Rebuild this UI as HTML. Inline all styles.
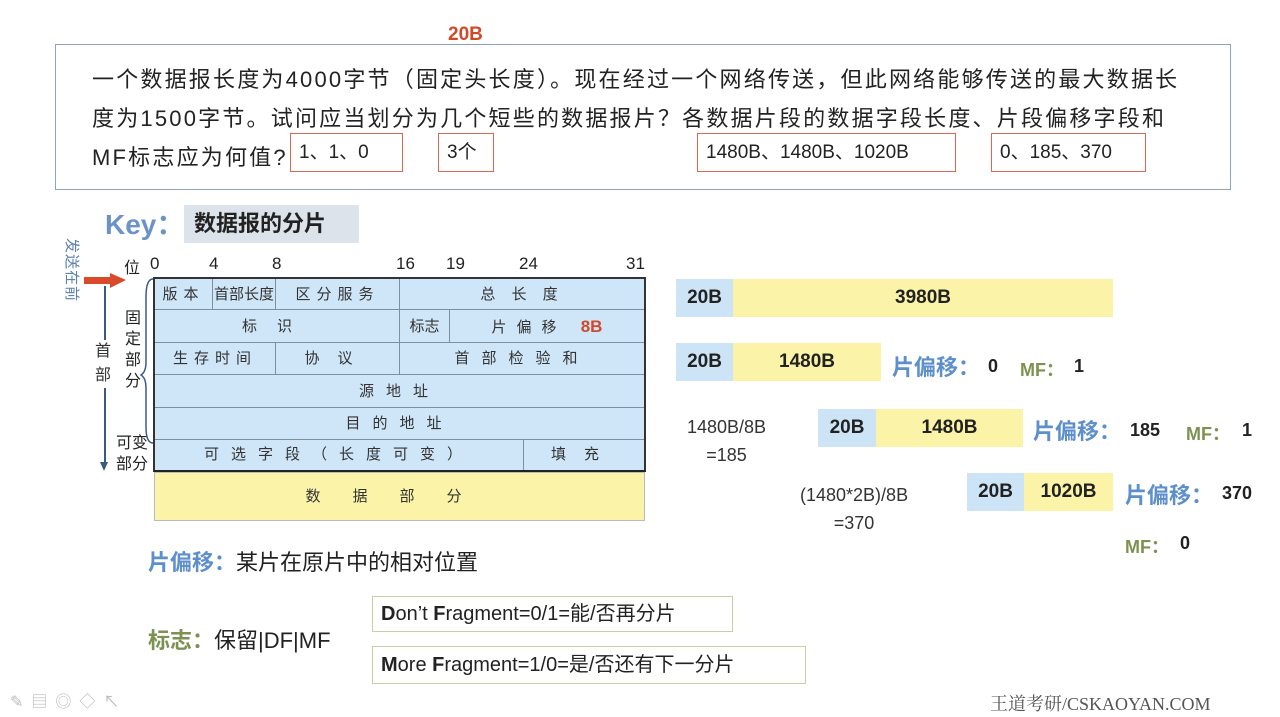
<!DOCTYPE html>
<html><head><meta charset="utf-8">
<style>
*{margin:0;padding:0;box-sizing:border-box}
body{width:1280px;height:717px;background:#fff;position:relative;overflow:hidden;font-family:"Liberation Sans","Noto Sans CJK SC",sans-serif;color:#222}
.a{position:absolute;white-space:nowrap}
.rb{position:absolute;border:1.5px solid #d86a52;font-size:19px;line-height:38px;padding-left:8px}
.cell{position:absolute;border-right:1px solid #7f8fa0;border-bottom:1px solid #7f8fa0;background:#cfe6f8;font-size:15px;color:#333;text-align:center;letter-spacing:6px}
.bl{position:absolute;background:#cde4f6;font-weight:bold;font-size:19px;text-align:center;line-height:38px}
.ye{position:absolute;background:#fbf3a8;font-weight:bold;font-size:19px;text-align:center;line-height:38px}
.py{color:#5d8fcc;font-weight:bold;font-size:22px}
.mf{color:#7d9250;font-weight:bold;font-size:18px}
.num{font-weight:bold;font-size:18px}
.h{position:absolute;font-size:17px;top:254px}
</style></head><body>
<div class="a" style="left:448px;top:24px;color:#d04a2a;font-weight:bold;font-size:19px">20B</div>
<div class="a" style="left:55px;top:44px;width:1176px;height:146px;border:1.5px solid #8da3c4"></div>
<div class="a" style="left:92px;top:60px;font-size:22px;line-height:39px;letter-spacing:2.2px">一个数据报长度为4000字节（固定头长度）。现在经过一个网络传送，但此网络能够传送的最大数据长<br>度为1500字节。试问应当划分为几个短些的数据报片？各数据片段的数据字段长度、片段偏移字段和<br>MF标志应为何值?</div>
<div class="rb" style="left:290px;top:133px;width:113px;height:39px">1、1、0</div>
<div class="rb" style="left:438px;top:133px;width:56px;height:39px">3个</div>
<div class="rb" style="left:697px;top:133px;width:259px;height:39px">1480B、1480B、1020B</div>
<div class="rb" style="left:991px;top:133px;width:155px;height:39px">0、185、370</div>

<div class="a" style="left:105px;top:203px;font-size:28px;font-weight:bold;color:#6c93c8">Key：</div>
<div class="a" style="left:184px;top:205px;width:175px;height:38px;background:#dde3ea;font-size:22px;font-weight:bold;line-height:38px;padding-left:10px">数据报的分片</div>

<div class="a" style="left:62px;top:238px;font-size:15px;color:#5a7fb0;writing-mode:vertical-rl;text-orientation:sideways;letter-spacing:1px">发送在前</div>
<div class="a" style="left:84px;top:277px;width:30px;height:7px;background:#d84a2a"></div>
<div class="a" style="left:110px;top:273px;border-left:16px solid #d84a2a;border-top:7px solid transparent;border-bottom:8px solid transparent"></div>
<div class="a" style="left:104px;top:286px;width:1.5px;height:180px;background:#3a5a80"></div>
<div class="a" style="left:100px;top:462px;border-top:9px solid #3a5a80;border-left:4px solid transparent;border-right:4px solid transparent"></div>
<div class="a" style="left:95px;top:340px;width:18px;background:#fff;font-size:16px;line-height:24px;color:#333">首<br>部</div>
<div class="a" style="left:124px;top:254px;font-size:16px">位</div>
<div class="a" style="left:125px;top:308px;font-size:16px;line-height:21px">固<br>定<br>部<br>分</div>
<div class="a" style="left:116px;top:433px;font-size:16px;line-height:21px">可变<br>部分</div>
<svg class="a" style="left:140px;top:277px" width="16" height="170"><path d="M13 2 Q6 2 6 20 L6 85 Q6 95 1 98 Q6 101 6 111 L6 150 Q6 166 13 166" fill="none" stroke="#3a5a90" stroke-width="1.5"/></svg>

<div class="h" style="left:150px">0</div>
<div class="h" style="left:209px">4</div>
<div class="h" style="left:272px">8</div>
<div class="h" style="left:396px">16</div>
<div class="h" style="left:446px">19</div>
<div class="h" style="left:519px">24</div>
<div class="h" style="left:626px">31</div>

<div class="a" style="left:153px;top:277px;width:493px;height:195px;border:2px solid #333;border-bottom:2px solid #222;background:#cfe6f8"></div>
<div class="cell" style="left:155px;top:279px;width:58px;height:31px;line-height:31px">版本</div>
<div class="cell" style="left:213px;top:279px;width:63px;height:31px;line-height:31px;letter-spacing:0">首部长度</div>
<div class="cell" style="left:276px;top:279px;width:124px;height:31px;line-height:31px">区分服务</div>
<div class="cell" style="left:400px;top:279px;width:244px;height:31px;line-height:31px;border-right:0">总 长 度</div>
<div class="cell" style="left:155px;top:310px;width:245px;height:33px;line-height:33px;letter-spacing:20px">标识</div>
<div class="cell" style="left:400px;top:310px;width:50px;height:33px;line-height:33px;letter-spacing:0">标志</div>
<div class="cell" style="left:450px;top:310px;width:194px;height:33px;line-height:33px;border-right:0;letter-spacing:10px">片偏移 <b style="color:#d04a2a;letter-spacing:0;font-size:17px">8B</b></div>
<div class="cell" style="left:155px;top:343px;width:121px;height:32px;line-height:32px">生存时间</div>
<div class="cell" style="left:276px;top:343px;width:124px;height:32px;line-height:32px;letter-spacing:18px">协议</div>
<div class="cell" style="left:400px;top:343px;width:244px;height:32px;line-height:32px;border-right:0;letter-spacing:12px">首部检验和</div>
<div class="cell" style="left:155px;top:375px;width:489px;height:33px;line-height:33px;border-right:0;letter-spacing:12px">源地址</div>
<div class="cell" style="left:155px;top:408px;width:489px;height:32px;line-height:32px;border-right:0;letter-spacing:12px">目的地址</div>
<div class="cell" style="left:155px;top:440px;width:369px;height:30px;line-height:30px;border-bottom:0;letter-spacing:12px">可选字段（长度可变）</div>
<div class="cell" style="left:524px;top:440px;width:120px;height:30px;line-height:30px;border:0;letter-spacing:18px">填充</div>
<div class="a" style="left:154px;top:472px;width:491px;height:49px;background:#fbf3a8;border:1px solid #bbb;font-size:15px;text-align:center;line-height:48px;letter-spacing:32px;color:#333">数据部分</div>

<div class="bl" style="left:676px;top:279px;width:57px;height:38px">20B</div>
<div class="ye" style="left:733px;top:279px;width:380px;height:38px">3980B</div>
<div class="bl" style="left:676px;top:343px;width:57px;height:38px">20B</div>
<div class="ye" style="left:733px;top:343px;width:148px;height:38px">1480B</div>
<div class="a py" style="left:892px;top:350px">片偏移：</div>
<div class="a num" style="left:988px;top:356px">0</div>
<div class="a mf" style="left:1020px;top:356px">MF：</div>
<div class="a num" style="left:1074px;top:356px">1</div>
<div class="a" style="left:687px;top:413px;font-size:18px;color:#333;line-height:28px;text-align:center">1480B/8B<br>=185</div>
<div class="bl" style="left:818px;top:409px;width:58px;height:38px">20B</div>
<div class="ye" style="left:876px;top:409px;width:147px;height:38px">1480B</div>
<div class="a py" style="left:1033px;top:414px">片偏移：</div>
<div class="a num" style="left:1130px;top:420px">185</div>
<div class="a mf" style="left:1186px;top:420px">MF：</div>
<div class="a num" style="left:1242px;top:420px">1</div>
<div class="a" style="left:800px;top:481px;font-size:18px;color:#333;line-height:28px;text-align:center">(1480*2B)/8B<br>=370</div>
<div class="bl" style="left:967px;top:473px;width:57px;height:38px">20B</div>
<div class="ye" style="left:1024px;top:473px;width:89px;height:38px">1020B</div>
<div class="a py" style="left:1125px;top:478px">片偏移：</div>
<div class="a num" style="left:1222px;top:483px">370</div>
<div class="a mf" style="left:1125px;top:533px">MF：</div>
<div class="a num" style="left:1180px;top:533px">0</div>

<div class="a" style="left:148px;top:545px;font-size:22px"><span style="color:#5d8fcc;font-weight:bold">片偏移：</span>某片在原片中的相对位置</div>
<div class="a" style="left:148px;top:623px;font-size:22px"><span style="color:#7d9250;font-weight:bold">标志：</span>保留|DF|MF</div>
<div class="a" style="left:372px;top:596px;width:361px;height:36px;border:1px solid #c9d0a8;font-size:20px;line-height:34px;padding-left:8px"><b>D</b>on’t <b>F</b>ragment=0/1=能/否再分片</div>
<div class="a" style="left:372px;top:646px;width:434px;height:38px;border:1px solid #c9d0a8;font-size:20px;line-height:36px;padding-left:8px"><b>M</b>ore <b>F</b>ragment=1/0=是/否还有下一分片</div>
<div class="a" style="left:10px;top:688px;font-size:16px;color:#bbb;letter-spacing:8px">✎▤◎◇↖</div>
<div class="a" style="left:990px;top:690px;font-family:'Liberation Serif','Noto Serif CJK SC',serif;font-size:18px;color:#555">王道考研/CSKAOYAN.COM</div>
</body></html>
